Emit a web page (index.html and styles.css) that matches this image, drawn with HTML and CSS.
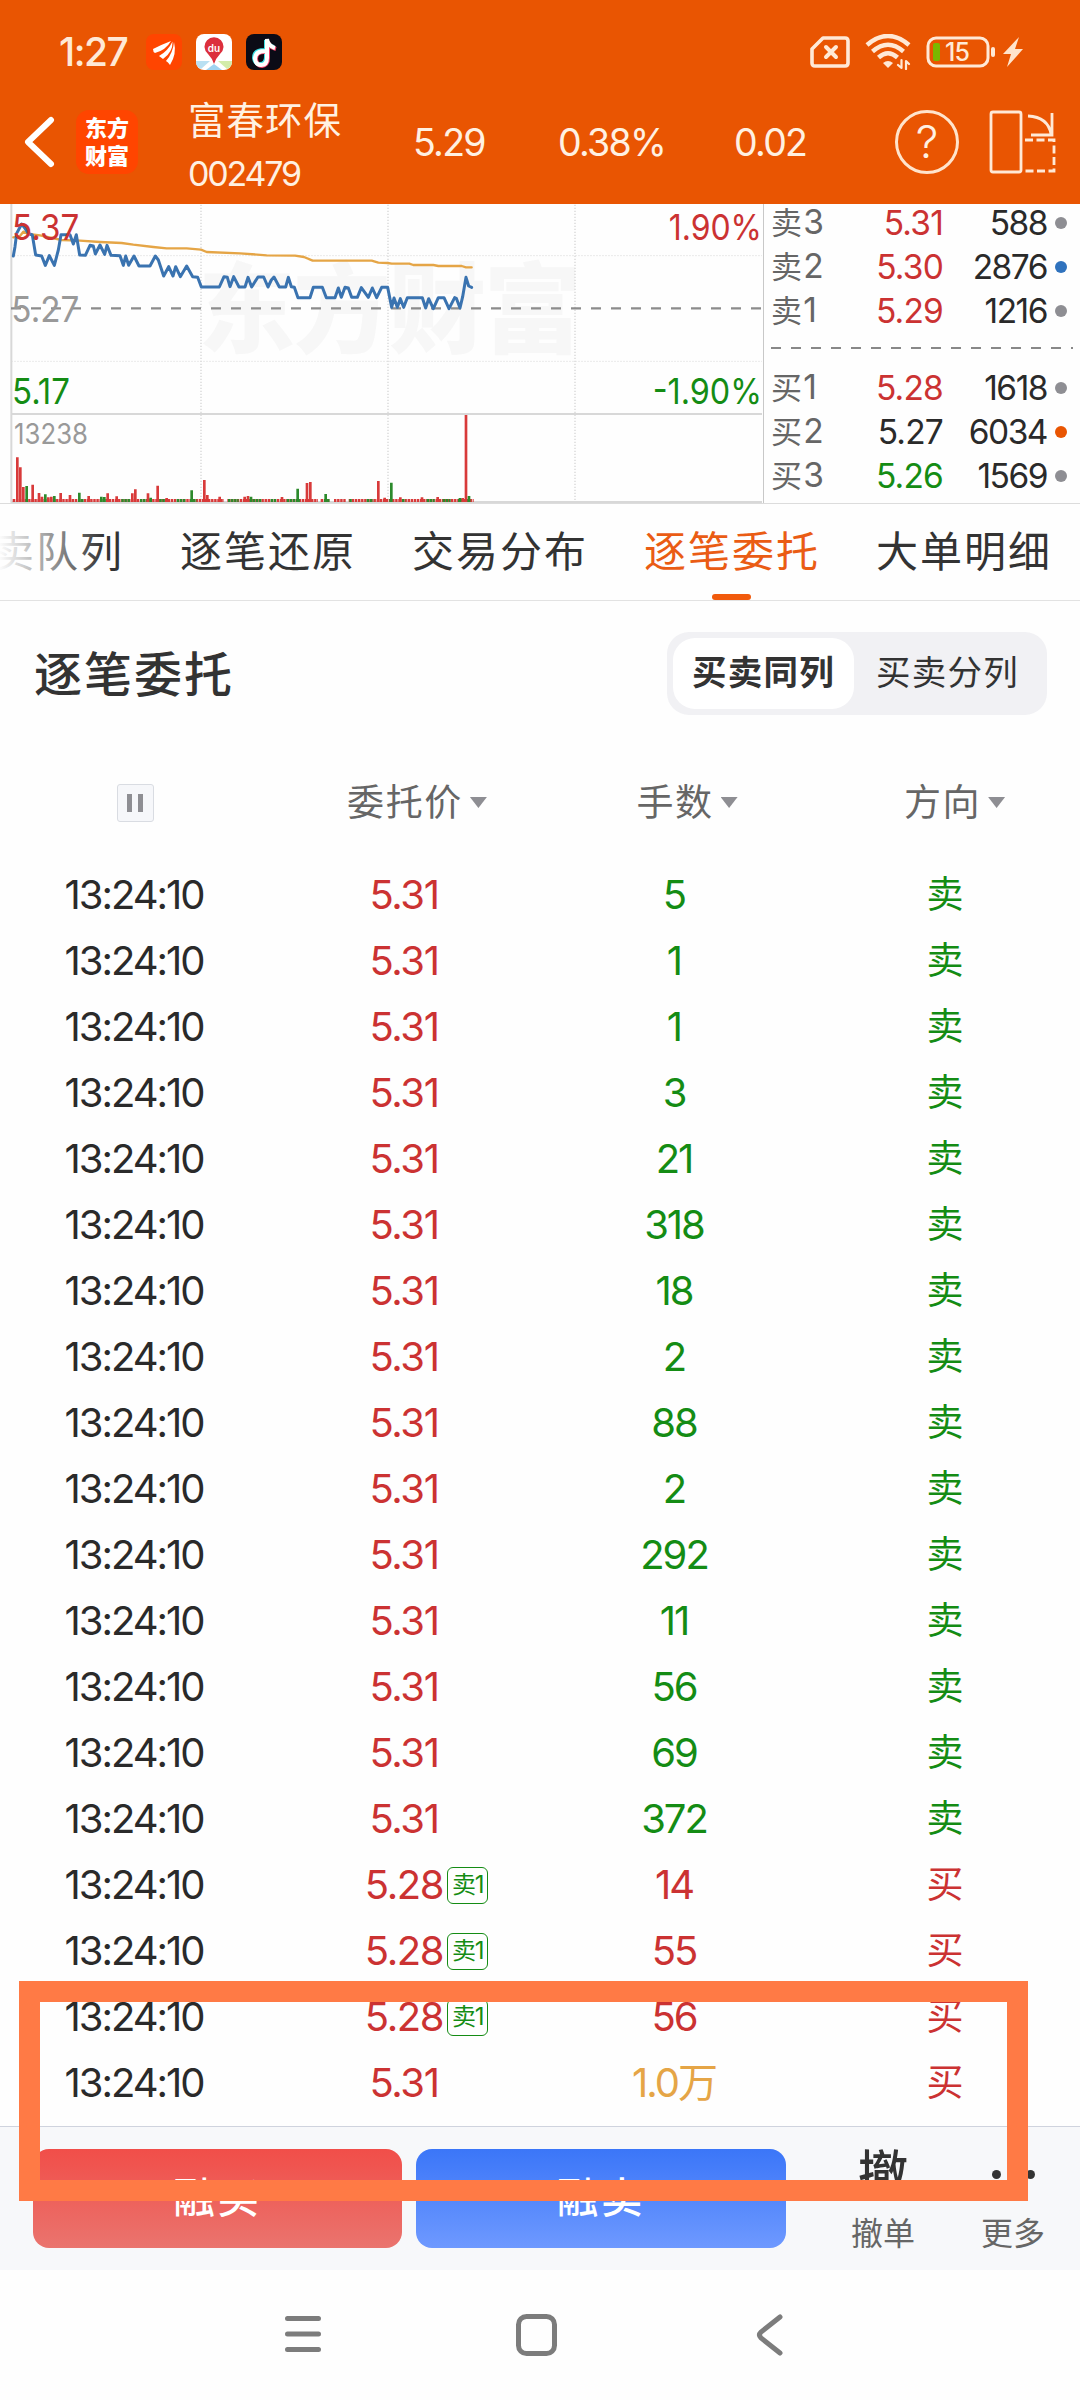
FILE: index.html
```html
<!DOCTYPE html>
<html lang="zh-CN">
<head>
    <meta charset="UTF-8">
    <meta name="viewport" content="width=device-width, initial-scale=1.0">
    <title>富春环保 002479</title>
    <link rel="stylesheet" href="styles.css">
</head>
<body>
    <header class="header">
        <div class="status-bar">
            <span class="clock">1:27</span>
            <svg class="app-icon" viewBox="0 0 36 36">
                <rect width="36" height="36" rx="8" fill="#ff4500"/>
                <path d="M7 15Q17 10 25 7Q20 16 9 19Q7 18 7 15ZM13 22Q22 17 26.500 7.500Q27 18 17 25ZM20 27Q27 19 28 8Q31 20 24 31Q22 28 20 27Z" fill="#fff"/>
            </svg>
            <svg class="app-icon" viewBox="0 0 36 36">
                <rect width="36" height="36" rx="8" fill="#fff"/>
                <path d="M0 27H14L5 35Q0 33 0 27Z" fill="#b9e0f2"/>
                <path d="M22 27H36Q36 33 31 35Z" fill="#d3ecaa"/>
                <path d="M18 30L26 36H10Z" fill="#9fd3f0"/>
                <path d="M18 30Q16 24 12 20A9.5 9.5 0 1 1 24 20Q20 24 18 30Z" fill="#dc2f3c"/>
                <text x="18" y="18" class="pin-text">du</text>
            </svg>
            <svg class="app-icon" viewBox="0 0 36 36">
                <rect width="36" height="36" rx="8" fill="#0b0b16"/>
                <g fill="none" stroke-width="4">
                    <path d="M18 16Q8 16 8 24Q9 30 14 30Q20 30 20 23V6Q22 12 28 13" stroke="#3fe0e6"/>
                    <path d="M20 18Q10 17 10 25Q11 32 16 32Q22 31 22 24V8Q23 13 30 15" stroke="#f2436b"/>
                    <path d="M19 17Q9 17 9 25Q10 31 15 31Q21 31 21 24V5Q22 12 29 14" stroke="#fff"/>
                </g>
            </svg>
            <div class="status-right">
                <svg width="40" height="32" viewBox="0 0 40 32" class="line-icon">
                    <path d="M13 2H35Q38 2 38 5V27Q38 30 35 30H5Q2 30 2 27V13Z" stroke-width="3.6"/>
                    <path d="M16 11L26 21M26 11L16 21" stroke-width="4"/>
                </svg>
                <svg width="46" height="36" viewBox="0 0 46 36" class="line-icon">
                    <path d="M2 11Q23 -7 44 11M7.500 17.500Q23 4 38.500 17.500M13.500 23.500Q23 15 32.500 23.500" stroke-width="4.500" stroke-linecap="butt"/>
                    <path d="M18 29Q23 25 28 29L23 34Z" class="solid"/>
                    <path d="M36.500 26V34L33 31M41 35V27L44 30" stroke-width="2.200"/>
                </svg>
                <svg width="70" height="32" viewBox="0 0 70 32" class="line-icon">
                    <rect x="2" y="2" width="60" height="28" rx="8" stroke-width="3"/>
                    <rect x="7" y="7" width="7" height="18" rx="2" class="charge"/>
                    <rect x="65" y="11" width="4" height="10" rx="2" class="solid"/>
                    <text x="31" y="25" class="battery-text">15</text>
                </svg>
                <svg width="20" height="30" viewBox="0 0 20 30">
                    <path d="M16 0L0 17H8L4 30L20 12H12Z" fill="#ffe4cc"/>
                </svg>
            </div>
        </div>
        <div class="quote-bar">
            <svg class="back" width="31" height="52" viewBox="0 0 31 52">
                <path d="M27 4L4 26L27 48" fill="none" stroke="#fff" stroke-width="6" stroke-linecap="round" stroke-linejoin="round"/>
            </svg>
            <div class="brand"><span>东方</span><span>财富</span></div>
            <div class="stock">
                <div class="stock-name">富春环保</div>
                <div class="stock-code">002479</div>
            </div>
            <span class="quote quote-price">5.29</span>
            <span class="quote quote-pct">0.38%</span>
            <span class="quote quote-diff">0.02</span>
            <div class="help">?</div>
            <svg class="rotate" width="68" height="64" viewBox="0 0 68 64">
                <g fill="none" stroke="#ffe9d6" stroke-width="2.800">
                    <rect x="2" y="2" width="30" height="60" rx="2"/>
                    <path d="M39 6Q59 7 62 24M63 3V25H42"/>
                    <path d="M36 30H65V61H36" stroke-dasharray="8 3.500"/>
                </g>
            </svg>
        </div>
    </header>

    <section class="market">
        <svg class="chart" viewBox="0 12 2289 897">
            <text class="watermark" x="594" y="436" textLength="1150">东方财富</text>
            <g class="grid-dotted">
                <path d="M34 167H2286M34 484H2286"/>
                <path d="M603 14V906M1164 14V906M1725 14V906" stroke-width="5"/>
            </g>
            <path class="grid-solid" d="M34 12V908M34 642H2286M34 906H2286"/>
            <path class="prev-close" d="M33 325H2283"/>
            <polyline class="avg" points="40,112 60,108 70,95 85,102 120,106 185,120 240,122 300,126 365,129 400,134 460,141 500,145 560,145 603,149 620,156 720,160 800,166 885,167 912,171 938,182 1115,182 1135,188 1163,189 1175,191 1228,191 1240,195 1300,195 1315,198 1385,198 1398,202 1415,202"/>
            <polyline class="price" points="40,168 45,140 50,100 65,72 75,85 85,100 97,105 107,165 125,168 136,196 148,167 163,196 175,150 183,104 210,104 220,132 229,104 239,165 256,166 270,136 280,138 286,162 300,135 314,163 321,136 333,166 360,167 370,196 377,168 386,196 402,168 417,198 450,198 466,168 475,180 491,228 506,200 519,228 527,200 541,230 560,198 578,230 593,232 604,261 658,261 672,230 682,232 690,260 701,230 717,261 735,261 744,232 755,261 774,231 791,231 804,261 814,240 822,231 838,261 857,261 865,232 874,260 883,262 894,293 930,293 940,262 967,262 979,293 1005,293 1015,264 1024,292 1035,262 1045,264 1055,292 1072,292 1084,263 1105,292 1117,264 1130,293 1145,262 1163,262 1175,322 1182,294 1192,322 1201,296 1211,322 1222,293 1267,293 1277,324 1286,296 1300,326 1315,293 1332,293 1347,326 1364,293 1369,295 1380,324 1388,290 1398,232 1406,258 1415,262"/>
            <!-- volume -->
            <path class="vol-base up" d="M38 901.500H672M682 901.500H954M962 901.500H990M1002 901.500H1037M1046 901.500H1421"/>
            <path class="vol-base down" d="M131 901.500H141M159 901.500H168M234 901.500H252M300 901.500H318M364 901.500H390M420 901.500H440M478 901.500H496M530 901.500H556M570 901.500H590M684 901.500H716M758 901.500H786M812 901.500H830M860 901.500H900M972 901.500H990M1048 901.500H1056M1100 901.500H1120M1168 901.500H1176M1206 901.500H1216M1280 901.500H1304M1328 901.500H1352M1374 901.500H1382M1402 901.500H1412"/>
            <path class="vol up" d="M52 906V772M61 906V802M70 906V861M98 906V854M117 906V879M126 906V890M145 906V892M154 906V890M182 906V879M210 906V885M266 906V888M323 906V880M350 906V889M397 906V880M406 906V868M444 906V880M473 906V857M500 906V894M613 906V840M622 906V885M659 906V890M734 906V890M744 906V888M846 906V891M921 906V849M931 906V846M1135 906V843M1154 906V893M1201 906V892M1266 906V892M1313 906V891M1388 906V894M1398 906V645"/>
            <path class="vol down" d="M80 906V858M136 906V883M163 906V888M238 906V878M304 906V890M313 906V891M452 906V893M575 906V871M753 906V890M893 906V866M977 906V882M1174 906V848M1380 906V894M1407 906V888"/>
            <g class="axis">
                <text class="up" x="36" y="119" textLength="202" lengthAdjust="spacingAndGlyphs">5.37</text>
                <text class="muted" x="34" y="365" textLength="204" lengthAdjust="spacingAndGlyphs">5.27</text>
                <text class="down" x="36" y="611" textLength="174" lengthAdjust="spacingAndGlyphs">5.17</text>
                <text class="up" x="2006" y="120" textLength="280" lengthAdjust="spacingAndGlyphs">1.90%</text>
                <text class="down" x="1958" y="612" textLength="328" lengthAdjust="spacingAndGlyphs">-1.90%</text>
                <text class="muted small" x="42" y="733" textLength="222" lengthAdjust="spacingAndGlyphs">13238</text>
            </g>
        </svg>
        <div class="book">
            <div class="level"><span>卖<i>3</i></span><b class="red">5.31</b><em>588</em><u class="dot"></u></div>
            <div class="level"><span>卖<i>2</i></span><b class="red">5.30</b><em>2876</em><u class="dot dot-blue"></u></div>
            <div class="level"><span>卖<i>1</i></span><b class="red">5.29</b><em>1216</em><u class="dot"></u></div>
            <div class="book-line"></div>
            <div class="level"><span>买<i>1</i></span><b class="red">5.28</b><em>1618</em><u class="dot"></u></div>
            <div class="level"><span>买<i>2</i></span><b>5.27</b><em>6034</em><u class="dot dot-orange"></u></div>
            <div class="level"><span>买<i>3</i></span><b class="green">5.26</b><em>1569</em><u class="dot"></u></div>
        </div>
    </section>

    <nav class="tabs">
        <a class="tab tab-faded">卖队列</a>
        <a class="tab">逐笔还原</a>
        <a class="tab">交易分布</a>
        <a class="tab active">逐笔委托</a>
        <a class="tab">大单明细</a>
    </nav>

    <main class="orders">
        <div class="orders-head">
            <h2>逐笔委托</h2>
            <div class="segment">
                <span class="segment-item selected">买卖同列</span>
                <span class="segment-item">买卖分列</span>
            </div>
        </div>
        <div class="row row-head">
            <div><span class="pause"></span></div>
            <div>委托价<span class="sort"></span></div>
            <div>手数<span class="sort"></span></div>
            <div>方向<span class="sort"></span></div>
        </div>
        <div class="row sell"><div>13:24:10</div><div>5.31</div><div>5</div><div>卖</div></div>
        <div class="row sell"><div>13:24:10</div><div>5.31</div><div>1</div><div>卖</div></div>
        <div class="row sell"><div>13:24:10</div><div>5.31</div><div>1</div><div>卖</div></div>
        <div class="row sell"><div>13:24:10</div><div>5.31</div><div>3</div><div>卖</div></div>
        <div class="row sell"><div>13:24:10</div><div>5.31</div><div>21</div><div>卖</div></div>
        <div class="row sell"><div>13:24:10</div><div>5.31</div><div>318</div><div>卖</div></div>
        <div class="row sell"><div>13:24:10</div><div>5.31</div><div>18</div><div>卖</div></div>
        <div class="row sell"><div>13:24:10</div><div>5.31</div><div>2</div><div>卖</div></div>
        <div class="row sell"><div>13:24:10</div><div>5.31</div><div>88</div><div>卖</div></div>
        <div class="row sell"><div>13:24:10</div><div>5.31</div><div>2</div><div>卖</div></div>
        <div class="row sell"><div>13:24:10</div><div>5.31</div><div>292</div><div>卖</div></div>
        <div class="row sell"><div>13:24:10</div><div>5.31</div><div>11</div><div>卖</div></div>
        <div class="row sell"><div>13:24:10</div><div>5.31</div><div>56</div><div>卖</div></div>
        <div class="row sell"><div>13:24:10</div><div>5.31</div><div>69</div><div>卖</div></div>
        <div class="row sell"><div>13:24:10</div><div>5.31</div><div>372</div><div>卖</div></div>
        <div class="row buy"><div>13:24:10</div><div>5.28<span class="tag">卖1</span></div><div>14</div><div>买</div></div>
        <div class="row buy"><div>13:24:10</div><div>5.28<span class="tag">卖1</span></div><div>55</div><div>买</div></div>
        <div class="row buy"><div>13:24:10</div><div>5.28<span class="tag">卖1</span></div><div>56</div><div>买</div></div>
        <div class="row buy"><div>13:24:10</div><div>5.31</div><div class="big">1.0万</div><div>买</div></div>
    </main>

    <footer class="trade-bar">
        <button class="btn btn-buy">融买</button>
        <button class="btn btn-sell">融卖</button>
        <div class="action"><span class="action-icon">撤</span><span class="action-label">撤单</span></div>
        <div class="action">
            <span class="action-icon"><i class="more-dot"></i><i class="more-dot"></i><i class="more-dot"></i></span>
            <span class="action-label">更多</span>
        </div>
    </footer>

    <div class="sys-nav">
        <svg viewBox="0 0 44 44"><path d="M5.500 5.500H36.500M5.500 21H36.500M5.500 36.500H36.500" stroke-linecap="round"/></svg>
        <svg viewBox="0 0 44 44"><rect x="2.500" y="3.500" width="36" height="37" rx="8"/></svg>
        <svg viewBox="0 0 44 44"><path d="M30 4L11 19Q8 22 11 25L30 40" stroke-linecap="round"/></svg>
    </div>

    <div class="highlight"></div>
</body>
</html>
```
FILE: styles.css
```css
* {
    box-sizing: border-box;
}
body {
    position: relative;
    width: 1080px;
    height: 2400px;
    margin: 0;
    overflow: hidden;
    background-color: #fefefe;
    color: #2a2a2a;
    font-family: Inter, "Noto Sans CJK SC", sans-serif;
}
svg {
    display: block;
    flex-shrink: 0;
}
.red {
    color: #cb3232;
}
.green {
    color: #148c14;
}

/* header */
.header {
    height: 204px;
    background-color: #e95502;
    color: #fff1e2;
}
.status-bar {
    display: flex;
    align-items: center;
    height: 80px;
    padding: 24px 57px 0 59px;
}
.clock {
    width: 87px;
    font-size: 39px;
    font-weight: 500;
    letter-spacing: -1.5px;
    line-height: 56px;
    color: #ffe9d6;
}
.app-icon {
    width: 36px;
    height: 36px;
    margin-right: 14px;
}
.pin-text {
    font-size: 10px;
    font-weight: 600;
    text-anchor: middle;
    fill: #fff;
}
.status-right {
    display: flex;
    align-items: center;
    gap: 15px;
    margin-left: auto;
}
.status-right svg:last-child {
    margin-left: -8px;
}
.line-icon {
    fill: none;
    stroke: #ffe9d6;
    stroke-linecap: round;
    stroke-linejoin: round;
}
.solid {
    fill: #ffe9d6;
    stroke: none;
}
.charge {
    fill: #7ab800;
    stroke: none;
}
.battery-text {
    font-size: 25px;
    font-weight: 500;
    text-anchor: middle;
    letter-spacing: -1px;
    fill: #ffe9d6;
    stroke: none;
}
.quote-bar {
    display: flex;
    align-items: center;
    height: 124px;
    padding-left: 24px;
}
.brand {
    display: flex;
    flex-direction: column;
    justify-content: center;
    width: 62px;
    height: 64px;
    margin-left: 21px;
    border-radius: 13px;
    background-color: #ff4500;
    color: #fff;
    font-size: 22px;
    font-weight: 900;
    line-height: 28px;
    text-align: center;
}
.stock {
    width: 225px;
    margin-left: 50px;
    padding-top: 9px;
}
.stock-name {
    font-size: 37.5px;
    letter-spacing: 1px;
    line-height: 54px;
}
.stock-code {
    font-size: 34px;
    letter-spacing: -2.2px;
    line-height: 52px;
}
.quote {
    font-size: 37.5px;
    letter-spacing: -1.7px;
}
.quote-price {
    width: 145px;
}
.quote-pct {
    width: 176px;
}
.quote-diff {
    width: 161px;
}
.help {
    width: 64px;
    height: 64px;
    border: 3px solid #ffe4cc;
    border-radius: 50%;
    font-size: 45px;
    font-weight: 300;
    line-height: 58px;
    text-align: center;
}
.rotate {
    margin-left: 30px;
}

/* chart and order book */
.market {
    display: flex;
    height: 300px;
    border-bottom: 1px solid #dcdcdc;
}
.chart {
    box-sizing: content-box;
    width: 763px;
    height: 299px;
    border-right: 1px solid #c8c8c8;
}
.watermark {
    font-family: "Noto Sans CJK SC", sans-serif;
    font-size: 292px;
    font-weight: 900;
    fill: #f7f7f7;
}
.grid-dotted {
    fill: none;
    stroke: #dedede;
    stroke-width: 3;
    stroke-dasharray: 4 5;
}
.grid-solid {
    fill: none;
    stroke: #d8d8d8;
    stroke-width: 6;
}
.prev-close {
    stroke: #8c8c8c;
    stroke-width: 7;
    stroke-dasharray: 30 30;
}
.avg,
.price {
    fill: none;
    stroke-linejoin: round;
    stroke-linecap: round;
}
.avg {
    stroke: #e5a546;
    stroke-width: 7;
}
.price {
    stroke: #3a73b0;
    stroke-width: 9;
}
.vol {
    stroke-width: 8;
}
.vol-base {
    stroke-width: 9;
    stroke-dasharray: 7.3 2;
}
.vol.up, .vol-base.up {
    stroke: #d83a3a;
}
.vol.down, .vol-base.down {
    stroke: #2c8a2c;
}
.axis {
    font-size: 108px;
}
.axis .small {
    font-size: 87px;
}
.axis .up {
    fill: #cb3232;
}
.axis .down {
    fill: #148c14;
}
.axis .muted {
    fill: #999;
}
.book {
    flex: 1;
    margin-top: -4px;
    padding: 0 7px;
}
.level {
    display: grid;
    grid-template-columns: 60px 112px 104px 20px;
    align-items: center;
    height: 44px;
    font-size: 33.5px;
    letter-spacing: -.8px;
    line-height: 44px;
}
.level span {
    font-size: 31px;
    color: #666;
}
.level i {
    margin-left: 2px;
    font-size: 33.5px;
}
.level b, .level em, .level i {
    font-style: normal;
    font-weight: 400;
    text-align: right;
}
.level em {
    letter-spacing: -1.5px;
}
.dot {
    width: 12px;
    height: 12px;
    margin-left: 8px;
    border-radius: 50%;
    background-color: #8e8e93;
}
.dot-blue {
    background-color: #2f72bd;
}
.dot-orange {
    background-color: #e95502;
}
.book-line {
    height: 2px;
    margin: 15px 0 16px;
    background: repeating-linear-gradient(90deg, #888 0 10px, transparent 10px 20px);
}

/* tabs */
.tabs {
    position: relative;
    display: flex;
    gap: 56px;
    height: 97px;
    padding-left: 180.5px;
    border-bottom: 1px solid #e2e2e2;
    overflow: hidden;
}
.tab {
    position: relative;
    flex-shrink: 0;
    color: #333;
    font-size: 42px;
    letter-spacing: 2px;
    line-height: 95px;
    white-space: nowrap;
}
.tab-faded {
    margin-left: -188.5px;
}
.tab-faded::after {
    content: "";
    position: absolute;
    inset: 0;
    background: linear-gradient(90deg, #fefefe 5%, rgba(254, 254, 254, 0) 85%);
}
.tab.active {
    color: #ea5c14;
}
.tab.active::after {
    content: "";
    position: absolute;
    left: 68px;
    bottom: 0;
    width: 39px;
    height: 6px;
    border-radius: 3px;
    background-color: #f15a0c;
}

/* orders */
.orders-head {
    display: flex;
    align-items: center;
    justify-content: space-between;
    height: 144px;
    padding: 0 33px 0 34px;
}
.orders-head h2 {
    margin: 0 0 4px;
    color: #333;
    font-size: 48px;
    font-weight: 500;
    letter-spacing: 2px;
}
.segment {
    display: flex;
    width: 380px;
    height: 83px;
    padding: 6px;
    border-radius: 22px;
    background-color: #f1f1f4;
}
.segment-item {
    width: 187px;
    border-radius: 22px;
    color: #333;
    font-size: 34.5px;
    letter-spacing: 1.2px;
    line-height: 70px;
    text-align: center;
}
.segment-item.selected {
    width: 181px;
    background-color: #fff;
    font-weight: 700;
}
.row {
    display: grid;
    grid-template-columns: repeat(4, 270px);
    height: 66px;
    font-size: 40px;
    line-height: 66px;
    letter-spacing: -2px;
}
.row div {
    display: flex;
    align-items: center;
    justify-content: center;
    padding-right: 2px;
}
.row div:nth-child(2) {
    letter-spacing: -1.4px;
}
.row div:nth-child(4) {
    font-size: 37px;
}
.row-head {
    height: 117px;
    padding-bottom: 2px;
    color: #666;
}
.row.row-head div {
    padding-right: 0;
    font-size: 37px;
    letter-spacing: 1.6px;
}
.row.row-head div:nth-child(4) {
    padding-right: 5px;
}
.pause {
    display: flex;
    align-items: center;
    justify-content: center;
    gap: 6px;
    width: 37px;
    height: 38px;
    border: 1px solid #d9dce2;
    border-radius: 3px;
    background-color: #f6f7fa;
}
.pause::before, .pause::after {
    content: "";
    width: 5px;
    height: 18px;
    background-color: #8e8e93;
}
.sort {
    width: 17px;
    height: 11px;
    margin: 0 -24px 0 7px;
    background-color: #8e8e93;
    clip-path: polygon(0 0, 100% 0, 50% 100%);
}
.sell div:nth-child(n+3) {
    color: #148c14;
}
.sell div:nth-child(2), .buy div:nth-child(n+2) {
    color: #cb3232;
}
.buy div.big:nth-child(3) {
    color: #e5a546;
}
.tag {
    width: 41px;
    height: 37px;
    margin: 0 -45px 0 4px;
    border: 1px solid #148c14;
    border-radius: 6px;
    color: #148c14;
    font-size: 24px;
    letter-spacing: -1.2px;
    line-height: 33px;
    text-align: center;
}

/* bottom trade bar */
.trade-bar {
    display: flex;
    align-items: flex-start;
    height: 144px;
    margin-top: 10px;
    padding: 22px 0 0 33px;
    border-top: 1px solid #cfd3de;
    background-color: #f7f8fa;
}
.btn {
    width: 369px;
    height: 99px;
    margin-right: 14px;
    padding: 0 0 7px;
    border: none;
    border-radius: 16px;
    color: #fff;
    font-family: inherit;
    font-size: 41.5px;
    font-weight: 500;
    letter-spacing: 2.5px;
}
.btn-buy {
    background: linear-gradient(#f14e49, #ea746e);
}
.btn-sell {
    width: 370px;
    background: linear-gradient(#3b76f8, #6e99ff);
}
.action {
    display: flex;
    flex-direction: column;
    align-items: center;
    width: 130px;
}
.action:nth-of-type(1) {
    margin-left: 18px;
}
.action-icon {
    display: flex;
    align-items: center;
    gap: 8px;
    height: 50px;
    font-size: 50px;
    font-weight: 500;
    line-height: 50px;
    color: #333;
}
.action-label {
    margin-top: 12px;
    color: #666;
    font-size: 32px;
    line-height: 46px;
}
.more-dot {
    width: 9px;
    height: 9px;
    border-radius: 50%;
    background-color: #333;
}

.sys-nav {
    display: flex;
    justify-content: space-between;
    height: 130px;
    padding: 43px 286px 0 282px;
    background-color: #fefefe;
}
.sys-nav svg {
    width: 44px;
    height: 44px;
    fill: none;
    stroke: #7c7c7c;
    stroke-width: 5;
}

/* marker box drawn over the latest orders */
.highlight {
    position: absolute;
    left: 19px;
    top: 1981px;
    width: 1009px;
    height: 220px;
    border: 21px solid #ff7a45;
}
```
